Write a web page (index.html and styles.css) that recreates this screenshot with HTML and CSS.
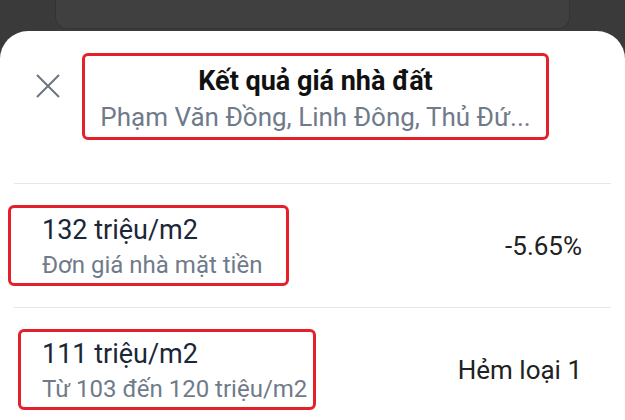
FILE: index.html
```html
<!DOCTYPE html>
<html>
<head>
    <meta charset="utf-8">
    <link rel="stylesheet" href="styles.css">
</head>
<body>
    <div class="backdrop-card"></div>
    <section class="sheet">
        <div class="sheet-header">
            <button class="close-btn" aria-label="Đóng">
                <svg width="24" height="24" viewBox="0 0 24 24">
                    <path d="M1 1 L23 23 M23 1 L1 23" stroke="#6b7582" stroke-width="2" fill="none"/>
                </svg>
            </button>
            <div class="title-block mark">
                <div class="title">Kết quả giá nhà đất</div>
                <div class="subtitle">Phạm Văn Đồng, Linh Đông, Thủ Đứ...</div>
            </div>
        </div>

        <div class="divider"></div>
        <div class="price-row">
            <div class="price-info mark first">
                <div class="price-value">132 triệu/m2</div>
                <div class="price-label">Đơn giá nhà mặt tiền</div>
            </div>
            <div class="price-side">-5.65%</div>
        </div>

        <div class="divider"></div>
        <div class="price-row">
            <div class="price-info mark second">
                <div class="price-value">111 triệu/m2</div>
                <div class="price-label">Từ 103 đến 120 triệu/m2</div>
            </div>
            <div class="price-side">Hẻm loại 1</div>
        </div>
    </section>
</body>
</html>
```

FILE: styles.css
```css
html, body {
    margin: 0;
    height: 100%;
}

body {
    background: #3a3a3a;
    font-family: Roboto, "Noto Sans", sans-serif;
    overflow: hidden;
}

.backdrop-card {
    margin: 0 55px;
    height: 28px;
    background: #404040;
    border: 1px solid #2e3832;
    border-top: none;
    border-radius: 0 0 12px 12px;
}

.sheet {
    margin-top: 2px;
    background: #fff;
    border-radius: 28px 28px 0 0;
    height: 400px;
}

.mark {
    border: 3px solid #e5202a;
    border-radius: 6px;
    box-sizing: border-box;
}

.sheet-header {
    display: flex;
    align-items: flex-start;
    padding: 22px 0 0 36px;
    height: 152px;
    box-sizing: border-box;
}

.close-btn {
    background: none;
    border: none;
    padding: 0;
    margin-top: 21px;
    width: 24px;
    height: 24px;
    cursor: pointer;
}

.close-btn svg {
    display: block;
}

.title-block {
    margin-left: 22px;
    width: 467px;
    height: 87px;
    text-align: center;
    padding-top: 9px;
}

.title {
    font-size: 27px;
    font-weight: 700;
    color: #111;
    line-height: 32px;
}

.subtitle {
    font-size: 26px;
    color: #6f7b8a;
    line-height: 40px;
    white-space: nowrap;
}

.divider {
    height: 1px;
    background: #e6e6e6;
    margin: 0 14px;
}

.price-row {
    display: flex;
    justify-content: space-between;
    align-items: center;
    padding: 21px 43px 21px 0;
    height: 123px;
    box-sizing: border-box;
}

.price-info {
    height: 81px;
    padding-top: 6px;
}

.price-info.first {
    margin-left: 8px;
    width: 281px;
    padding-left: 31px;
}

.price-info.second {
    margin-left: 18px;
    width: 298px;
    padding-left: 21px;
}

.price-value {
    font-size: 27px;
    color: #1b2738;
    line-height: 32px;
}

.price-label {
    font-size: 24px;
    color: #6f7b8a;
    line-height: 38px;
    white-space: nowrap;
}

.price-side {
    font-size: 26px;
    color: #222;
}
```
